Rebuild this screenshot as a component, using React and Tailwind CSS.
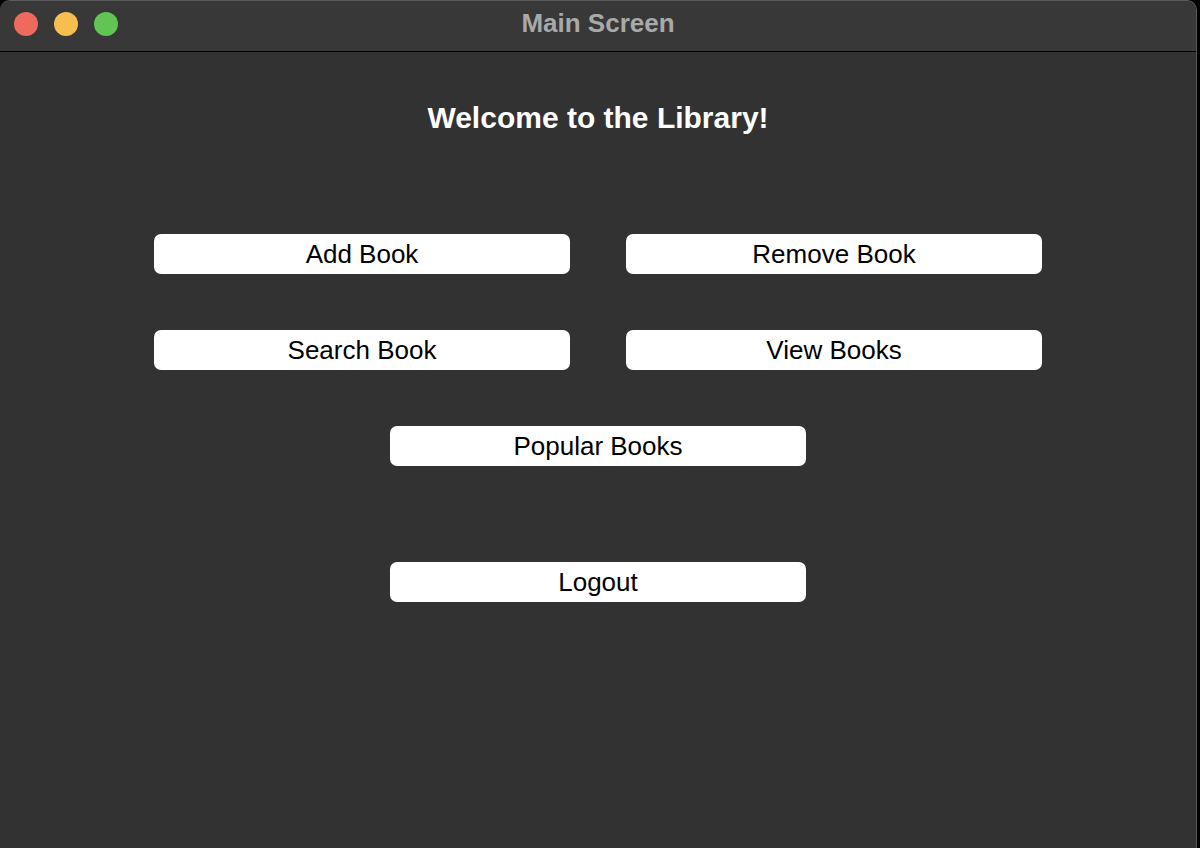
const buttonClass =
  "w-[416px] h-10 bg-white rounded-[7px] text-black text-[26px] leading-none flex items-center justify-center"

const MenuButton = ({ label }) => (
  <button className={buttonClass}>{label}</button>
)

const App = () => {
  return (
    <div
      className="w-[1200px] h-[848px] overflow-hidden bg-black"
      style={{ fontFamily: '"Liberation Sans", Arial, sans-serif' }}
    >
      <div className="w-[1197px] h-[856px] rounded-[10px] overflow-hidden border-t border-r border-[#5a5a5a] bg-[#323232] flex flex-col">
        {/* Title bar */}
        <div className="relative h-[51px] shrink-0 bg-[#383838] border-b border-black flex items-center justify-center">
          <div className="absolute left-[14px] top-[11px] flex gap-4">
            <span className="w-6 h-6 rounded-full bg-[#ee6a5f]" />
            <span className="w-6 h-6 rounded-full bg-[#f5be4f]" />
            <span className="w-6 h-6 rounded-full bg-[#61c554]" />
          </div>
          <span className="text-[26px] font-bold text-[#a9a9a9] leading-none -mt-[6px]">Main Screen</span>
        </div>

        {/* Content */}
        <div className="flex flex-col items-center pt-[51px]">
          <h1 className="text-[30px] font-bold text-white leading-none">
            Welcome to the Library!
          </h1>

          <div className="grid grid-cols-2 gap-x-14 gap-y-14 mt-[101px]">
            <MenuButton label="Add Book" />
            <MenuButton label="Remove Book" />
            <MenuButton label="Search Book" />
            <MenuButton label="View Books" />
          </div>

          <div className="mt-14">
            <MenuButton label="Popular Books" />
          </div>

          <div className="mt-24">
            <MenuButton label="Logout" />
          </div>
        </div>
      </div>
    </div>
  )
}

export default App
